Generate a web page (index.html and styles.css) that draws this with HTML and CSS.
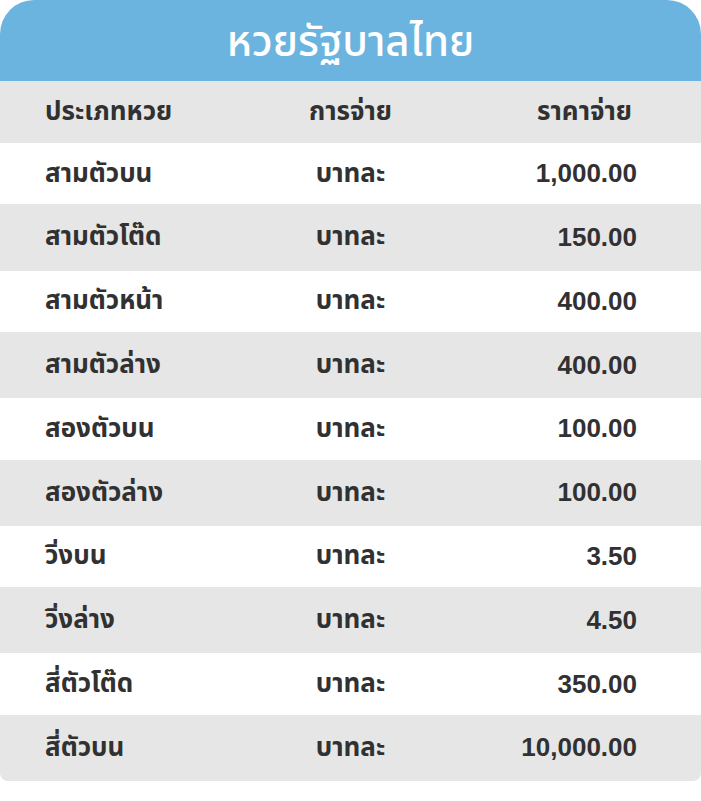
FILE: index.html
```html
<!DOCTYPE html>
<html lang="th">
<head>
<meta charset="utf-8">
<title>หวยรัฐบาลไทย</title>
<link rel="stylesheet" href="styles.css">
</head>
<body>
<div class="card">
  <div class="title">หวยรัฐบาลไทย</div>
  <div class="row head">
    <div class="c1">ประเภทหวย</div>
    <div class="c2">การจ่าย</div>
    <div class="c3 h3">ราคาจ่าย</div>
  </div>
  <div class="row odd"><div class="c1">สามตัวบน</div><div class="c2">บาทละ</div><div class="c3">1,000.00</div></div>
  <div class="row even"><div class="c1">สามตัวโต๊ด</div><div class="c2">บาทละ</div><div class="c3">150.00</div></div>
  <div class="row odd"><div class="c1">สามตัวหน้า</div><div class="c2">บาทละ</div><div class="c3">400.00</div></div>
  <div class="row even"><div class="c1">สามตัวล่าง</div><div class="c2">บาทละ</div><div class="c3">400.00</div></div>
  <div class="row odd"><div class="c1">สองตัวบน</div><div class="c2">บาทละ</div><div class="c3">100.00</div></div>
  <div class="row even"><div class="c1">สองตัวล่าง</div><div class="c2">บาทละ</div><div class="c3">100.00</div></div>
  <div class="row odd"><div class="c1">วิ่งบน</div><div class="c2">บาทละ</div><div class="c3">3.50</div></div>
  <div class="row even"><div class="c1">วิ่งล่าง</div><div class="c2">บาทละ</div><div class="c3">4.50</div></div>
  <div class="row odd"><div class="c1">สี่ตัวโต๊ด</div><div class="c2">บาทละ</div><div class="c3">350.00</div></div>
  <div class="row even last"><div class="c1">สี่ตัวบน</div><div class="c2">บาทละ</div><div class="c3">10,000.00</div></div>
</div>
</body>
</html>
```
FILE: styles.css
```css
html, body {
  margin: 0;
  padding: 0;
  background: #ffffff;
}
body {
  font-family: "Liberation Sans", "Noto Sans Thai", sans-serif;
  color: #313131;
}
.card {
  width: 701px;
}
.title {
  height: 81px;
  background: #6ab4df;
  border-radius: 34px 34px 0 0;
  color: #ffffff;
  font-family: "Noto Sans Thai", "Noto Sans Thai UI", "Liberation Sans", sans-serif;
  font-size: 42px;
  font-weight: 500;
  display: flex;
  align-items: center;
  justify-content: center;
  padding-top: 4px;
  box-sizing: border-box;
}
.row {
  display: grid;
  grid-template-columns: 1fr 1fr 1fr;
  align-items: center;
  font-size: 26px;
  font-weight: 700;
  padding: 0 45px;
}
.head {
  height: 62px;
  background: #e6e6e6;
  font-family: "Noto Sans Thai", "Noto Sans Thai UI", "Liberation Sans", sans-serif;
  font-size: 26px;
}
.odd {
  height: 61.4px;
  background: #ffffff;
}
.even {
  height: 66.2px;
  background: #e6e6e6;
}
.last {
  border-radius: 0 0 8px 8px;
}
.c1 {
  text-align: left;
}
.c2 {
  text-align: center;
}
.c3 {
  text-align: right;
  padding-right: 19px;
  font-size: 26px;
}
.h3 {
  padding-right: 24px;
}
```
